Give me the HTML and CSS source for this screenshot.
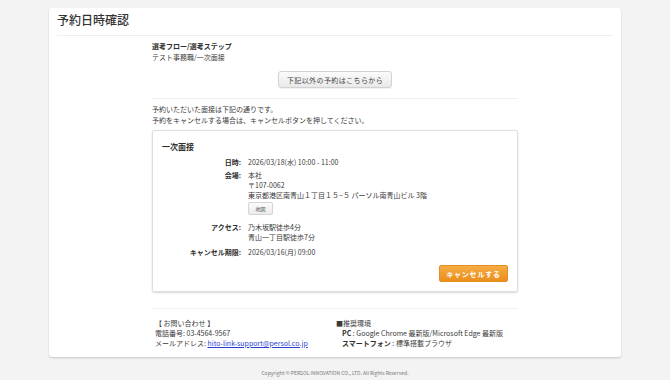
FILE: index.html
```html
<!DOCTYPE html>
<html lang="ja">
<head>
<meta charset="utf-8">
<title>予約日時確認</title>
<link rel="stylesheet" href="styles.css">
</head>
<body>
<div class="page">
  <div class="card">
    <h1 class="title">予約日時確認</h1>
    <div class="column">
      <div class="flow">
        <div class="bold">選考フロー/選考ステップ</div>
        <div>テスト事務職/一次面接</div>
      </div>
      <div class="center">
        <button class="btn-gray">下記以外の予約はこちらから</button>
      </div>
      <div class="notice">
        <div>予約いただいた面接は下記の通りです。</div>
        <div>予約をキャンセルする場合は、キャンセルボタンを押してください。</div>
      </div>
      <div class="box">
        <div class="box-title">一次面接</div>
        <div class="grid">
          <div class="label">日時:</div>
          <div class="value">2026/03/18(水) 10:00 - 11:00</div>
          <div class="label">会場:</div>
          <div class="value">
            <div>本社</div>
            <div>〒107-0062</div>
            <div>東京都港区南青山１丁目１５−５ パーソル南青山ビル 3階</div>
            <button class="btn-map">地図</button>
          </div>
          <div class="label">アクセス:</div>
          <div class="value">
            <div>乃木坂駅徒歩4分</div>
            <div>青山一丁目駅徒歩7分</div>
          </div>
          <div class="label last">キャンセル期限:</div>
          <div class="value last">2026/03/16(月) 09:00</div>
        </div>
        <div class="actions">
          <button class="btn-orange">キャンセルする</button>
        </div>
      </div>
      <div class="footer">
        <div class="fcol fcol-left">
          <div>【 お問い合わせ 】</div>
          <div>電話番号: 03-4564-9567</div>
          <div>メールアドレス: <a href="#" class="link">hito-link-support@persol.co.jp</a></div>
        </div>
        <div class="fcol">
          <div>■推奨環境</div>
          <div class="indent"><span class="bold">PC</span> : Google Chrome 最新版/Microsoft Edge 最新版</div>
          <div class="indent"><span class="bold">スマートフォン</span> : 標準搭載ブラウザ</div>
        </div>
      </div>
    </div>
  </div>
  <div class="copyright">Copyright © PERSOL INNOVATION CO., LTD. All Rights Reserved.</div>
</div>
</body>
</html>
```
FILE: styles.css
```css
* { box-sizing: border-box; }
html, body {
  margin: 0;
  padding: 0;
  background: #f3f3f3;
  font-family: "Noto Sans CJK JP", "Noto Sans", sans-serif;
  color: #3a3a3a;
  font-size: 7px;
}
.page {
  padding-top: 8px;
}
.card {
  width: 572px;
  margin-left: 49px;
  background: #fff;
  border-radius: 3px;
  box-shadow: 0 1px 2px rgba(0,0,0,0.18);
  padding: 3px 8px 9px;
}
.title {
  margin: 0;
  font-size: 12px;
  line-height: 18px;
  font-weight: 500;
  color: #333;
  padding-bottom: 6px;
  border-bottom: 1px solid #efefef;
}
.column {
  width: 366px;
  margin: 0 auto;
}
.flow {
  margin-top: 5px;
  line-height: 11px;
}
.bold { font-weight: 700; color: #2e2e2e; }
.center {
  display: flex;
  justify-content: center;
  margin-top: 8px;
  padding-bottom: 10px;
  border-bottom: 1px solid #f0f0f0;
}
button {
  font-family: inherit;
  cursor: pointer;
}
.btn-gray {
  width: 114px;
  height: 17px;
  padding: 0;
  font-size: 7px;
  letter-spacing: 0.4px;
  color: #444;
  background: linear-gradient(#fbfbfb, #e9e9e9);
  border: 1px solid #d2d2d2;
  border-radius: 3px;
  box-shadow: 0 1px 1px rgba(0,0,0,0.06);
}
.notice {
  margin-top: 5px;
  line-height: 11px;
}
.box {
  margin-top: 4px;
  border: 1px solid #dedede;
  border-radius: 2px;
  box-shadow: 0 1px 2px rgba(0,0,0,0.15);
  padding: 10px 9px 9px 9px;
}
.box-title {
  font-size: 8px;
  font-weight: 700;
  color: #2e2e2e;
  line-height: 12px;
}
.grid {
  margin-top: 4px;
  display: grid;
  grid-template-columns: 79px 1fr;
  column-gap: 7px;
  row-gap: 3px;
  line-height: 10px;
}
.label {
  text-align: right;
  font-weight: 700;
  color: #2e2e2e;
}
.last { margin-top: 2px; }
.btn-map {
  display: block;
  margin: 2px 0 4px;
  width: 25px;
  height: 13px;
  padding: 0;
  font-size: 5px;
  color: #555;
  background: linear-gradient(#fbfbfb, #ebebeb);
  border: 1px solid #d4d4d4;
  border-radius: 2px;
}
.actions {
  display: flex;
  justify-content: flex-end;
  margin-top: 8px;
}
.btn-orange {
  width: 69px;
  height: 17px;
  padding: 0;
  font-size: 7px;
  font-weight: 700;
  letter-spacing: 0.8px;
  color: #fff;
  background: linear-gradient(#f6ac45, #ea8f1c);
  border: 1px solid #e3901f;
  border-radius: 2px;
}
.footer {
  margin-top: 16px;
  border-top: 1px solid #f2f2f2;
  padding-top: 9px;
  display: grid;
  grid-template-columns: 1fr 1fr;
  line-height: 10px;
}
.fcol { padding-left: 1px; }
.fcol-left { padding-left: 3px; }
.indent { padding-left: 6px; }
.link {
  color: #2a3fd0;
  text-decoration: underline;
}
.copyright {
  text-align: center;
  font-size: 5px;
  color: #777;
  margin-top: 12px;
  line-height: 8px;
}
```
